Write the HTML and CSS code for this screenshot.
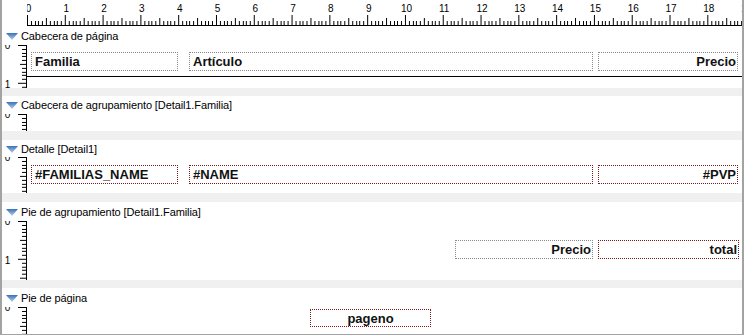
FILE: index.html
```html
<!DOCTYPE html>
<html>
<head>
<meta charset="utf-8">
<title>Diseño de informe</title>
<link rel="stylesheet" href="styles.css">
</head>
<body>
<svg class="defs" width="0" height="0">
<defs>
<pattern id="hticks" width="37.795" height="26" patternUnits="userSpaceOnUse">
<path d="M0.5 15V25M4.28 21V25M8.06 21V25M11.84 21V25M15.62 21V25M19.4 18V25M23.18 21V25M26.96 21V25M30.74 21V25M34.52 21V25" stroke="#000" stroke-width="1" shape-rendering="crispEdges"/>
</pattern>
<pattern id="vticks" width="25" height="37.795" patternUnits="userSpaceOnUse">
<path d="M16 0.5H25M20 4.28H25M20 8.06H25M20 11.84H25M20 15.62H25M18 19.4H25M20 23.18H25M20 26.96H25M20 30.74H25M20 34.52H25" stroke="#000" stroke-width="1" shape-rendering="crispEdges"/>
</pattern>
<linearGradient id="tri" x1="0" y1="0" x2="0" y2="1">
<stop offset="0" stop-color="#3a72b8"/>
<stop offset="1" stop-color="#b3d2f3"/>
</linearGradient>
</defs>
</svg>

<div class="frame">

<!-- regla superior -->
<div class="hruler">
<div class="corner"></div>
<svg class="hsvg" width="715" height="26">
<rect width="715" height="25" fill="url(#hticks)"/>
<line x1="0" y1="25.5" x2="715" y2="25.5" stroke="#000"/>
<g class="rnum" text-anchor="middle">
<text x="1.5" y="12">0</text>
<text x="39.3" y="12">1</text>
<text x="77.1" y="12">2</text>
<text x="114.9" y="12">3</text>
<text x="152.7" y="12">4</text>
<text x="190.5" y="12">5</text>
<text x="228.3" y="12">6</text>
<text x="266.1" y="12">7</text>
<text x="303.9" y="12">8</text>
<text x="341.7" y="12">9</text>
<text x="379.5" y="12">10</text>
<text x="417.2" y="12">11</text>
<text x="455" y="12">12</text>
<text x="492.8" y="12">13</text>
<text x="530.6" y="12">14</text>
<text x="568.4" y="12">15</text>
<text x="606.2" y="12">16</text>
<text x="644" y="12">17</text>
<text x="681.8" y="12">18</text>
<text x="719.6" y="12">19</text>
</g>
</svg>
</div>

<!-- Cabecera de pagina -->
<div class="bhead h19">
<svg class="tri" width="12" height="7"><polygon points="0,0 12,0 6,7" fill="url(#tri)"/></svg>
<span>Cabecera de página</span>
</div>
<div class="band b1">
<svg class="vruler" width="25" height="43">
<rect width="25" height="43" fill="url(#vticks)"/>
<line x1="24.5" y1="0" x2="24.5" y2="43" stroke="#000"/>
<text class="rnum" x="5.5" y="3.5" text-anchor="middle">0</text>
<text class="rnum" x="5.5" y="42.5" text-anchor="middle">1</text>
</svg>
<div class="bbody">
<div class="row top7">
<div class="fld gray w147 ml4">Familia</div>
<div class="fld gray w404 ml11">Artículo</div>
<div class="fld gray w140 ml5 right">Precio</div>
</div>
<div class="hline"></div>
</div>
</div>
<div class="sep h8"></div>

<!-- Cabecera de agrupamiento -->
<div class="bhead h18">
<svg class="tri" width="12" height="7"><polygon points="0,0 12,0 6,7" fill="url(#tri)"/></svg>
<span>Cabecera de agrupamiento [Detail1.Familia]</span>
</div>
<div class="band b2">
<svg class="vruler" width="25" height="17">
<rect width="25" height="17" fill="url(#vticks)"/>
<line x1="24.5" y1="0" x2="24.5" y2="17" stroke="#000"/>
<text class="rnum" x="5.5" y="3.5" text-anchor="middle">0</text>
</svg>
<div class="bbody"></div>
</div>
<div class="sep h9"></div>

<!-- Detalle -->
<div class="bhead h17">
<svg class="tri" width="12" height="7"><polygon points="0,0 12,0 6,7" fill="url(#tri)"/></svg>
<span>Detalle [Detail1]</span>
</div>
<div class="band b3">
<svg class="vruler" width="25" height="36">
<rect width="25" height="36" fill="url(#vticks)"/>
<line x1="24.5" y1="0" x2="24.5" y2="36" stroke="#000"/>
<text class="rnum" x="5.5" y="3.5" text-anchor="middle">0</text>
</svg>
<div class="bbody">
<div class="row top8">
<div class="fld red w147 ml4">#FAMILIAS_NAME</div>
<div class="fld red w404 ml11">#NAME</div>
<div class="fld red w140 ml5 right">#PVP</div>
</div>
</div>
</div>
<div class="sep h9"></div>

<!-- Pie de agrupamiento -->
<div class="bhead h19">
<svg class="tri" width="12" height="7"><polygon points="0,0 12,0 6,7" fill="url(#tri)"/></svg>
<span>Pie de agrupamiento [Detail1.Familia]</span>
</div>
<div class="band b4">
<svg class="vruler" width="25" height="59">
<rect width="25" height="59" fill="url(#vticks)"/>
<line x1="24.5" y1="0" x2="24.5" y2="59" stroke="#000"/>
<text class="rnum" x="5.5" y="3.5" text-anchor="middle">0</text>
<text class="rnum" x="5.5" y="42.5" text-anchor="middle">1</text>
</svg>
<div class="bbody">
<div class="row top19">
<div class="fld gray w138 ml428 right">Precio</div>
<div class="fld red w141 ml5 right">total</div>
</div>
</div>
</div>
<div class="sep h8"></div>

<!-- Pie de pagina -->
<div class="bhead h19">
<svg class="tri" width="12" height="7"><polygon points="0,0 12,0 6,7" fill="url(#tri)"/></svg>
<span>Pie de página</span>
</div>
<div class="band b5">
<svg class="vruler" width="25" height="27">
<rect width="25" height="27" fill="url(#vticks)"/>
<line x1="24.5" y1="0" x2="24.5" y2="27" stroke="#000"/>
<text class="rnum" x="5.5" y="3.5" text-anchor="middle">0</text>
</svg>
<div class="bbody">
<div class="row top2">
<div class="fld red w121 ml283 center h18f">pageno</div>
</div>
</div>
</div>

</div>
</body>
</html>
```

FILE: styles.css
```css
html, body {margin: 0; padding: 0; background: #ffffff}
body {font-family: "Liberation Sans", Arial, sans-serif; color: #000000}
.defs {display: block; width: 0; height: 0; overflow: hidden}

.frame {width: 744px; height: 335px; box-sizing: border-box; border-left: 2px solid #a3a3a3; border-right: 2px solid #a3a3a3; border-bottom: 1px solid #a3a3a3; display: flex; flex-direction: column; overflow: hidden; background: #ffffff}

.hruler {display: flex; height: 26px; flex: none}
.corner {width: 25px; flex: none}
.hsvg {display: block; flex: none}
.rnum {font-family: "Liberation Sans", Arial, sans-serif; font-size: 10px; fill: #000000}

.bhead {display: flex; align-items: center; flex: none; padding-left: 4px; font-size: 11px; letter-spacing: -0.1px; color: #000000; background: #ffffff}
.bhead span {margin-left: 3px}
.tri {display: block; flex: none; margin-top: 1px}
.h17 {height: 17px}
.h18 {height: 18px}
.h19 {height: 19px}

.sep {flex: none; background: #f0f0f0}
.h8 {height: 8px}
.h9 {height: 9px}

.band {display: flex; flex: none; background: #ffffff}
.b1 {height: 43px}
.b2 {height: 17px}
.b3 {height: 36px}
.b4 {height: 59px}
.b5 {height: 27px}
.vruler {display: block; flex: none}
.bbody {flex: 1; display: flex; flex-direction: column}

.row {display: flex; flex: none}
.top2 {margin-top: 2px}
.top7 {margin-top: 7px}
.top8 {margin-top: 8px}
.top19 {margin-top: 19px}

.hline {margin-top: 5px; border-top: 1px solid #000000}

.fld {height: 19px; box-sizing: border-box; display: flex; align-items: center; padding: 0 3px; font-size: 13px; font-weight: bold; color: #111111; white-space: nowrap; flex: none}
.h18f {height: 18px}
.gray {border: 1px dotted #8a8a8a}
.red {border: 1px dotted #7a1a1a}
.right {justify-content: flex-end; padding-right: 1px}
.center {justify-content: center}

.w121 {width: 121px}
.w138 {width: 138px}
.w140 {width: 140px}
.w141 {width: 141px}
.w147 {width: 147px}
.w404 {width: 404px}
.ml4 {margin-left: 4px}
.ml5 {margin-left: 5px}
.ml11 {margin-left: 11px}
.ml283 {margin-left: 283px}
.ml428 {margin-left: 428px}
```
